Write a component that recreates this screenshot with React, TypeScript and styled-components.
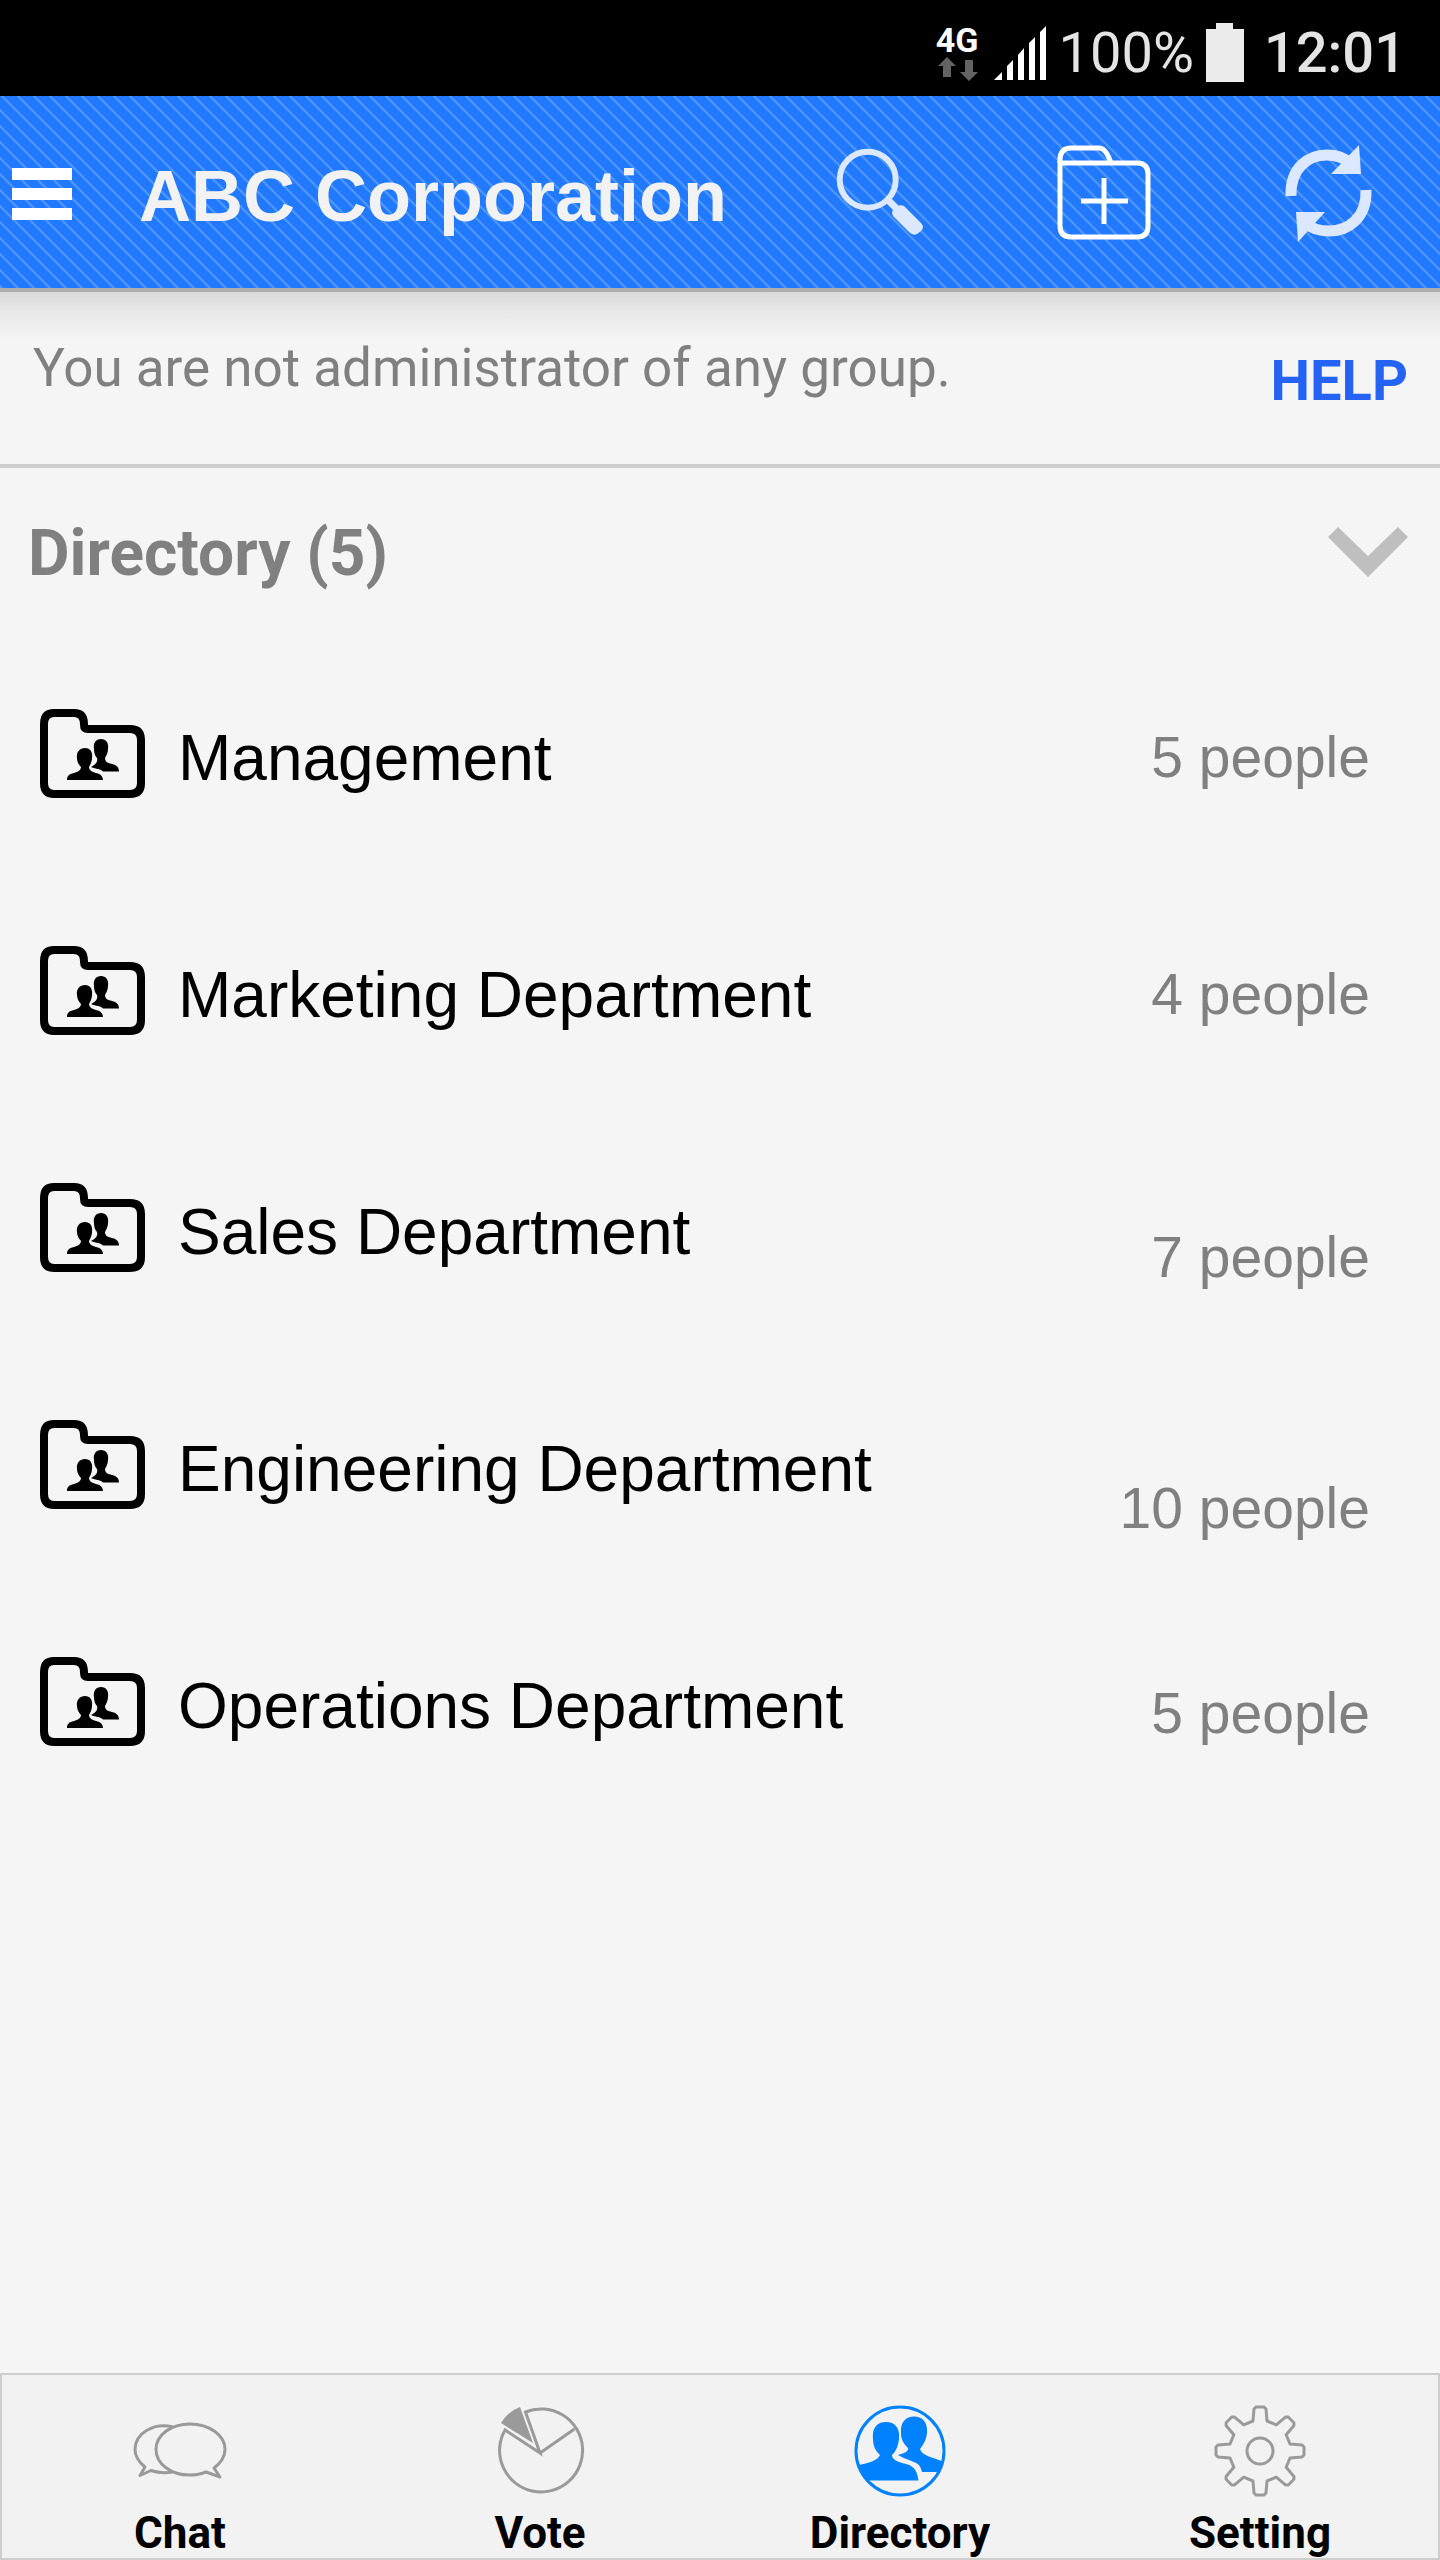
import React from "react";
import styled, { createGlobalStyle } from "styled-components";

const GlobalStyle = createGlobalStyle`
  *, *::before, *::after { box-sizing: border-box; }
  body {
    margin: 0;
    background: #f5f5f5;
    font-family: Roboto, "Liberation Sans", sans-serif;
  }
  button { border: 0; padding: 0; margin: 0; background: none; color: inherit; font: inherit; cursor: pointer; }
  svg { display: block; flex: none; }
`;

const HELVETICA = `"Liberation Sans", Arial, sans-serif`;

const Screen = styled.div`
  display: flex;
  flex-direction: column;
  min-height: 100vh;
`;

const StatusBar = styled.div`
  display: flex;
  align-items: center;
  justify-content: flex-end;
  gap: 12px;
  height: 96px;
  padding: 10px 34px 0 0;
  background: #000;
  color: #e4e4e4;
`;

const Network = styled.div`
  display: flex;
  flex-direction: column;
  align-items: center;
  gap: 2px;
  margin-right: 4px;
  color: #fff;
  font-size: 34px;
  line-height: 30px;
  font-weight: 700;
`;

const BatteryLevel = styled.span`
  font-size: 56px;
  line-height: 64px;
`;

const Clock = styled.time`
  margin-left: 8px;
  font-size: 56px;
  line-height: 64px;
  font-weight: 500;
`;

const Header = styled.header`
  display: flex;
  align-items: center;
  height: 196px;
  padding: 4px 56px 0 12px;
  border-bottom: 4px solid #adadad;
  background-color: #2079ff;
  background-image: linear-gradient(
    45deg,
    #3d8bff 0%, #4d95ff 3%, #4d95ff 9%, #2079ff 13%,
    #2079ff 49%, #4d95ff 53%, #4d95ff 59%,
    #2079ff 63%, #2079ff 98%, #3d8bff 100%
  );
  background-size: 16px 16px;
`;

const Title = styled.h1`
  flex: 1;
  margin: 0 0 0 66px;
  padding-top: 4px;
  color: #f2f2f2;
  font-family: ${HELVETICA};
  font-size: 72px;
  line-height: 84px;
  font-weight: 700;
`;

const Actions = styled.div`
  display: flex;
  gap: 112px;
`;

const Notice = styled.section`
  display: flex;
  align-items: flex-start;
  justify-content: space-between;
  height: 176px;
  padding: 46px 32px 0 33px;
  border-bottom: 4px solid #cecece;
  background: linear-gradient(#d9d9d9, #e8e8e8 20px, #f5f5f5 48px);
`;

const NoticeText = styled.p`
  margin: 0;
  color: #808080;
  font-size: 53px;
  line-height: 60px;
`;

const HelpLink = styled.a`
  margin-top: 11px;
  color: #2563f5;
  font-size: 56px;
  line-height: 64px;
  font-weight: 700;
  text-decoration: none;
`;

const SectionToggle = styled.button`
  display: flex;
  align-items: center;
  justify-content: space-between;
  width: 100%;
  height: 170px;
  padding: 0 32px 0 28px;
`;

const SectionTitle = styled.span`
  padding-top: 2px;
  color: #808080;
  font-size: 64px;
  line-height: 76px;
  font-weight: 700;
`;

const List = styled.ul`
  flex: 1;
  margin: 0;
  padding: 0;
  list-style: none;
`;

const Row = styled.button`
  display: flex;
  align-items: center;
  gap: 33px;
  width: 100%;
  height: 237px;
  padding: 0 70px 0 40px;
  font-family: ${HELVETICA};
  text-align: left;
`;

const RowName = styled.span`
  flex: 1;
  padding-top: 2px;
  color: #000;
  font-size: 64px;
  line-height: 76px;
`;

const RowCount = styled.span<{ $drop: number }>`
  margin-top: ${(p) => p.$drop}px;
  color: #808080;
  font-size: 57px;
  line-height: 64px;
`;

const TabBar = styled.nav`
  display: grid;
  grid-template-columns: repeat(4, 1fr);
  padding: 2px 0;
  background: #f2f2f2;
  box-shadow: inset 0 0 0 2px #cecece;
`;

const Tab = styled.button`
  display: flex;
  flex-direction: column;
  align-items: center;
  gap: 9px;
  padding-top: 28px;
  color: #000;
  font-size: 44px;
  line-height: 50px;
  font-weight: 700;
`;

const DataArrows = () => (
  <svg width="42" height="24" viewBox="0 0 42 24" fill="#636363" aria-hidden="true">
    <path d="M11 0 20 9H15V20H7V9H2Z" />
    <path d="M33 24 24 15H29V3H37V15H42Z" />
  </svg>
);

const Signal = () => (
  <svg width="52" height="54" viewBox="0 0 52 54" fill="#fff" aria-hidden="true">
    <path d="M0 54 8 46V54ZM13 54V40L19 34V54ZM24 54V29L30 22V54ZM35 54V17L41 11V54ZM46 54V6L52 0V54Z" />
  </svg>
);

const Battery = () => (
  <svg width="38" height="60" viewBox="0 0 38 60" fill="#ececec" aria-hidden="true">
    <path d="M10 0H27V6H38V59H0V6H10Z" />
  </svg>
);

const MenuIcon = () => (
  <svg width="61" height="52" viewBox="0 0 61 52" fill="#fff" aria-hidden="true">
    <path d="M0 0H60V12H0ZM0 20H60V32H0ZM0 40H60V52H0Z" />
  </svg>
);

const SearchIcon = () => (
  <svg width="112" height="112" viewBox="824 138 112 112" fill="none" stroke="#dce8ff" aria-hidden="true">
    <circle cx="867.7" cy="179.7" r="28" strokeWidth="6" />
    <path d="M887 199 897 209" strokeWidth="7" />
    <path
      d="M892 213C892 209 899 203 904 206L921 223Q925 227 921 231L917 234Q913 236 909 232L893 216Z"
      fill="#dce8ff"
      stroke="none"
    />
  </svg>
);

const AddFolderIcon = () => (
  <svg width="112" height="112" viewBox="1048 138 112 112" fill="none" stroke="#fff" strokeWidth="5" aria-hidden="true">
    <path d="M1060 163V226Q1060 237 1071 237H1137Q1148 237 1148 226V174Q1148 163 1137 163Z" />
    <path d="M1060 163V160Q1060 148 1071 148H1099Q1106 148 1111 163" />
    <path d="M1081 201H1128M1104 178V224" />
  </svg>
);

const RefreshIcon = () => (
  <svg width="112" height="112" viewBox="1272 138 112 112" fill="none" stroke="#dce8ff" strokeWidth="11" aria-hidden="true">
    <path d="M1291 196C1290 168 1308 155 1327 155Q1341 155 1350 163" />
    <path d="M1359 145 1361 174H1331Z" fill="#dce8ff" stroke="none" />
    <path d="M1366 190C1367 218 1348 231 1329 231Q1314 231 1305 223" />
    <path d="M1298 242 1296 212H1325Z" fill="#dce8ff" stroke="none" />
  </svg>
);

const Chevron = () => (
  <svg width="80" height="52" viewBox="0 0 80 52" fill="#bfbfbf" aria-hidden="true">
    <path d="M0 10 10 0 40 29 70 0 80 10 40 50Z" />
  </svg>
);

const GroupFolderIcon = () => (
  <svg width="105" height="96" viewBox="40 709 105 96" aria-hidden="true">
    <path
      d="M44 724Q44 713 54 713H74Q84 713 84 724V725Q84 729 88 729H130Q141 729 141 740V783Q141 794 130 794H54Q44 794 44 783Z"
      fill="none"
      stroke="#000"
      strokeWidth="8"
    />
    <path d="M101 739C106 739 109 743 108 749C108 753 106 756 105 758C105 762 108 763 112 764C117 765 119 768 119 771.500H103C101 769 96 769 91 767C96 764 98 762 97 758C95 756 94 753 94 749C93 743 96 739 101 739Z" />
    <path d="M85 748C90 748 93 752 92 758C92 762 90 765 89 767C89 770 92 772 96 773C101 774 103 777 103 780H67C67 776 69 774 74 773C78 772 81 770 81 767C79 765 77 762 77 758C76 752 80 748 85 748Z" />
  </svg>
);

const ChatIcon = () => (
  <svg width="96" height="96" viewBox="132 2403 96 96" fill="none" stroke="#9a9a9a" strokeWidth="3" strokeLinejoin="round" aria-hidden="true">
    <path d="M173 2427C154 2422 135 2433 135 2449.500Q135 2459 145 2467L140 2475.500 151 2470.500Q161 2474 173 2472" />
    <path d="M214 2468C222 2462 225 2456 225 2449.500C225 2435 209 2424 190 2424C171 2424 156 2435 156 2449.500C156 2464 171 2475 190 2475Q199 2475 206 2472L220 2477Z" />
  </svg>
);

const VoteIcon = () => (
  <svg width="96" height="96" viewBox="492 2403 96 96" fill="none" stroke="#9a9a9a" strokeWidth="3" aria-hidden="true">
    <path d="M540 2453 505 2430A41.500 41.500 0 1 0 525.500 2412Z" />
    <path d="M540 2453 574.500 2429" />
    <path d="M533 2443 520 2407Q507 2412 501 2423Z" fill="#9a9a9a" stroke="none" />
  </svg>
);

const DirectoryIcon = () => (
  <svg width="96" height="96" viewBox="852 2403 96 96" fill="#0082ff" aria-hidden="true">
    <clipPath id="badge">
      <circle cx="900" cy="2451" r="44" />
    </clipPath>
    <g clipPath="url(#badge)">
      <path d="M914 2416.500C923 2416.500 928 2423 927 2433C926 2441 923 2445 920 2449C922 2456 932 2457 944 2462V2472H922C920 2463 916 2463 909 2460C904 2458 901 2457 898 2455C905 2453 909 2451 908 2448C904 2444 901 2440 901 2433C900 2422 906 2416.500 914 2416.500Z" />
      <path d="M886 2422C896 2422 900 2429 899 2439C898 2447 896 2451 892 2455C892 2459 896 2461 902 2463C914 2465 917 2470 918.500 2480.500H852V2467C864 2463 876 2463 880 2455C876 2451 873 2447 873 2439C872 2429 876 2422 886 2422Z" />
    </g>
    <circle cx="900" cy="2451" r="44" fill="none" stroke="#0082ff" strokeWidth="3" />
  </svg>
);

const TOOTH: [number, number][] = [
  [-7, -30], [-6, -42], [-4, -44], [4, -44], [6, -42], [7, -30],
];
const GEAR_POINTS = Array.from({ length: 8 }, (_, i) => {
  const a = (i * Math.PI) / 4;
  return TOOTH.map(
    ([x, y]) =>
      `${(x * Math.cos(a) - y * Math.sin(a)).toFixed(2)},${(x * Math.sin(a) + y * Math.cos(a)).toFixed(2)}`
  ).join(" ");
}).join(" ");

const SettingIcon = () => (
  <svg width="96" height="96" viewBox="-48 -48 96 96" fill="none" stroke="#9a9a9a" strokeWidth="3" strokeLinejoin="round" aria-hidden="true">
    <polygon points={GEAR_POINTS} />
    <circle r="13" />
  </svg>
);

const departments = [
  { name: "Management", people: 5, drop: 0 },
  { name: "Marketing Department", people: 4, drop: 0 },
  { name: "Sales Department", people: 7, drop: 52 },
  { name: "Engineering Department", people: 10, drop: 80 },
  { name: "Operations Department", people: 5, drop: 16 },
];

const tabs = [
  { label: "Chat", Icon: ChatIcon },
  { label: "Vote", Icon: VoteIcon },
  { label: "Directory", Icon: DirectoryIcon },
  { label: "Setting", Icon: SettingIcon },
];

export default function App() {
  return (
    <Screen>
      <GlobalStyle />
      <StatusBar>
        <Network>
          4G
          <DataArrows />
        </Network>
        <Signal />
        <BatteryLevel>100%</BatteryLevel>
        <Battery />
        <Clock>12:01</Clock>
      </StatusBar>
      <Header>
        <button type="button" aria-label="Menu">
          <MenuIcon />
        </button>
        <Title>ABC Corporation</Title>
        <Actions>
          <button type="button" aria-label="Search">
            <SearchIcon />
          </button>
          <button type="button" aria-label="Add group">
            <AddFolderIcon />
          </button>
          <button type="button" aria-label="Refresh">
            <RefreshIcon />
          </button>
        </Actions>
      </Header>
      <Notice>
        <NoticeText>You are not administrator of any group.</NoticeText>
        <HelpLink href="#help">HELP</HelpLink>
      </Notice>
      <SectionToggle type="button" aria-expanded="true">
        <SectionTitle>Directory ({departments.length})</SectionTitle>
        <Chevron />
      </SectionToggle>
      <List>
        {departments.map((d) => (
          <li key={d.name}>
            <Row type="button">
              <GroupFolderIcon />
              <RowName>{d.name}</RowName>
              <RowCount $drop={d.drop}>{d.people} people</RowCount>
            </Row>
          </li>
        ))}
      </List>
      <TabBar>
        {tabs.map(({ label, Icon }) => (
          <Tab key={label} type="button" aria-current={label === "Directory" ? "page" : undefined}>
            <Icon />
            {label}
          </Tab>
        ))}
      </TabBar>
    </Screen>
  );
}
